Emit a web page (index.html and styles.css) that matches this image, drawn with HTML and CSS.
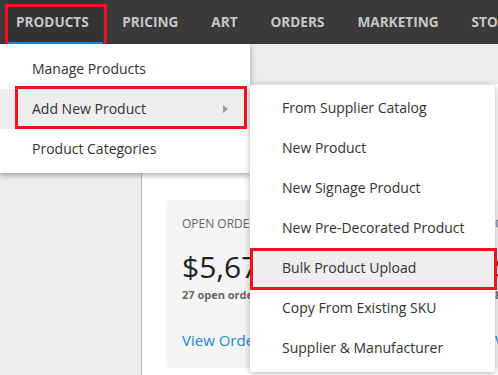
FILE: index.html
```html
<!DOCTYPE html>
<html lang="en">
<head>
  <meta charset="UTF-8">
  <title>Products</title>
  <link rel="stylesheet" href="styles.css">
</head>
<body>
  <div class="topnav">
    <ul class="tabs">
      <li class="tab active">PRODUCTS
        <span class="mark mark-tab"></span>
        <ul class="menu">
          <li>Manage Products</li>
          <li class="has-sub hover">Add New Product
            <span class="caret"></span>
            <span class="mark mark-add"></span>
            <ul class="submenu">
              <li>From Supplier Catalog</li>
              <li>New Product</li>
              <li>New Signage Product</li>
              <li>New Pre-Decorated Product</li>
              <li class="hover">Bulk Product Upload<span class="mark mark-bulk"></span></li>
              <li>Copy From Existing SKU</li>
              <li>Supplier &amp; Manufacturer</li>
            </ul>
          </li>
          <li>Product Categories</li>
        </ul>
      </li>
      <li class="tab">PRICING</li>
      <li class="tab">ART</li>
      <li class="tab">ORDERS</li>
      <li class="tab">MARKETING</li>
      <li class="tab">STORES</li>
    </ul>
  </div>

  <div class="layout">
    <div class="sidebar"></div>
    <div class="main">
      <div class="page-head"></div>
      <div class="cards">
        <div class="card">
          <div class="card-label">Open Orders</div>
          <div class="card-value">$5,678.90</div>
          <div class="card-sub">27 open orders</div>
          <a class="card-link">View Orders</a>
        </div>
        <div class="card">
          <div class="card-label">Open Quotes</div>
          <div class="card-value">$1,240.00</div>
          <div class="card-sub">8 open quotes</div>
          <a class="card-link">View Quotes</a>
        </div>
      </div>
    </div>
  </div>
</body>
</html>
```

FILE: styles.css
```css
* {margin: 0; padding: 0; box-sizing: border-box;}
html, body {height: 100%; overflow: hidden;}
body {
  font-family: "Open Sans", "Liberation Sans", sans-serif;
  font-size: 14px;
  color: #333;
  background: #fff;
}
li {list-style: none;}

.topnav {
  position: relative;
  z-index: 10;
  height: 44px;
  background: #3a3a3a;
}
.tabs {
  display: flex;
  height: 44px;
  padding-left: 8px;
  white-space: nowrap;
}
.tab {
  position: relative;
  height: 44px;
  line-height: 44px;
  padding: 0 16.5px;
  font-size: 13.6px;
  font-weight: 700;
  color: #c6c6c6;
}
.tab.active {
  background: #333;
  box-shadow: inset 0 -2px 0 #1a8fe0;
  padding: 0 14px 0 8px;
  margin-right: 3px;
}

.mark {
  position: absolute;
  border: 3px solid #f0131f;
  pointer-events: none;
}
.mark-tab {top: 4px; left: -3px; right: -4px; bottom: -3px;}
.mark-add {top: -3px; left: 15px; right: 3px; bottom: 0;}
.mark-bulk {top: 0; left: 0; right: -2px; bottom: -2px;}

.menu {
  position: absolute;
  top: 44px;
  left: -8px;
  width: 250px;
  padding: 5px 0 4px;
  background: #fff;
  box-shadow: 0 2px 6px rgba(0, 0, 0, .35);
  font-weight: 400;
  color: #333;
}
.menu li {
  position: relative;
  height: 40px;
  line-height: 40px;
  padding-left: 32px;
  font-size: 14px;
}
.menu li.hover {background: #eee;}
.caret {
  position: absolute;
  top: 16px;
  right: 22px;
  border-left: 5px solid #9a9a9a;
  border-top: 4px solid transparent;
  border-bottom: 4px solid transparent;
}
.submenu {
  position: absolute;
  top: -4px;
  left: 250px;
  width: 245px;
  padding: 3px 0 4px;
  background: #fff;
  border-radius: 3px;
  box-shadow: 0 1px 6px rgba(0, 0, 0, .3);
}

.layout {
  display: flex;
  height: calc(100% - 44px);
}
.sidebar {
  flex: none;
  width: 142px;
  background: #ededed;
  border-right: 1px solid #b8b8b8;
}
.main {flex: 1;}
.page-head {
  height: 40px;
  background: #ececec;
}
.cards {
  display: flex;
  gap: 23px;
  padding: 116px 0 0 24px;
}
.card {
  flex: none;
  width: 290px;
  height: 168px;
  padding: 15px 16px;
  background: #f5f5f5;
  border-radius: 4px;
  white-space: nowrap;
}
.card-label {
  font-size: 12px;
  text-transform: uppercase;
  color: #666;
}
.card-value {
  margin-top: 14px;
  font-size: 30px;
  line-height: 41px;
  color: #222;
}
.card-sub {
  font-size: 11px;
  font-weight: 700;
  color: #666;
}
.card-link {
  display: block;
  margin-top: 28px;
  font-size: 15px;
  color: #1a86cf;
}
```
